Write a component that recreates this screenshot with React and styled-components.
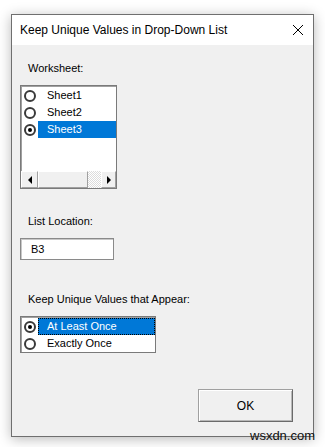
import React from 'react';
import styled, { createGlobalStyle } from 'styled-components';

const GlobalStyle = createGlobalStyle`
  body {
    margin: 0;
    background: #ffffff;
    font-family: "Liberation Sans", Arial, sans-serif;
  }
`;

const Page = styled.div`
  position: relative;
  width: 325px;
  height: 447px;
  padding: 14px 0 0 11px;
  box-sizing: border-box;
  overflow: hidden;
`;

const Window = styled.div`
  width: 303px;
  height: 423px;
  box-sizing: border-box;
  border: 1px solid #6f6f6f;
  background: #f0f0f0;
  box-shadow: 0 2px 12px rgba(0, 0, 0, 0.28);
  display: flex;
  flex-direction: column;
`;

const TitleBar = styled.div`
  height: 30px;
  background: #ffffff;
  display: flex;
  align-items: center;
  justify-content: space-between;
  padding: 0 9px 0 8px;
  font-size: 12px;
  color: #000;
`;

const CloseIcon = () => (
  <svg width="12" height="12" viewBox="0 0 12 12">
    <path d="M1 1 L11 11 M11 1 L1 11" stroke="#000" strokeWidth="1" />
  </svg>
);

const Body = styled.div`
  flex: 1;
  display: flex;
  flex-direction: column;
  padding: 0 0 0 8px;
  font-size: 11px;
  color: #000;
`;

const Label = styled.div`
  margin: ${p => p.top}px 0 0 8px;
  height: 13px;
  line-height: 13px;
`;

const ListBox = styled.div`
  margin-top: ${p => p.top}px;
  width: ${p => p.w}px;
  height: ${p => p.h}px;
  box-sizing: border-box;
  border: 1px solid #7a7a7a;
  box-shadow: inset 1px 1px 0 #a0a0a0;
  background: #fff;
  display: flex;
  flex-direction: column;
  padding-top: 1px;
`;

const Rows = styled.div`
  flex: 1;
`;

const Row = styled.div`
  height: 17px;
  display: flex;
  align-items: center;
`;

const Radio = styled.span`
  width: 12px;
  height: 12px;
  box-sizing: border-box;
  border: 2px solid #3a3a3a;
  border-radius: 50%;
  margin: 0 2px 0 3px;
  display: flex;
  align-items: center;
  justify-content: center;
  flex: none;

  &::after {
    content: '';
    width: 4px;
    height: 4px;
    border-radius: 50%;
    background: ${p => (p.checked ? '#000' : 'transparent')};
  }
`;

const ItemText = styled.span`
  flex: 1;
  height: 17px;
  line-height: 17px;
  padding-left: 9px;
  box-sizing: border-box;
  background: ${p => (p.selected ? '#0078d7' : 'transparent')};
  color: ${p => (p.selected ? '#fff' : '#000')};
  outline: ${p => (p.focused ? '1px dotted #000' : 'none')};
  outline-offset: -1px;
`;

const ScrollBar = styled.div`
  height: 17px;
  display: flex;
  background-image: repeating-conic-gradient(#ffffff 0 25%, #dcdcdc 0 50%);
  background-size: 2px 2px;
`;

const ScrollButton = styled.div`
  width: ${p => p.w}px;
  box-sizing: border-box;
  background: #f0f0f0;
  border-top: 1px solid #fff;
  border-left: 1px solid #fff;
  border-right: 1px solid #a0a0a0;
  border-bottom: 1px solid #a0a0a0;
  display: flex;
  align-items: center;
  justify-content: center;
  margin-left: ${p => (p.push ? 'auto' : '0')};
`;

const Arrow = styled.span`
  width: 0;
  height: 0;
  border-top: 4px solid transparent;
  border-bottom: 4px solid transparent;
  ${p => (p.dir === 'left' ? 'border-right: 4px solid #000;' : 'border-left: 4px solid #000;')}
`;

const TextBox = styled.div`
  margin-top: 10px;
  width: 94px;
  height: 22px;
  box-sizing: border-box;
  border: 1px solid #8a8a8a;
  box-shadow: inset 1px 1px 0 #c8c8c8;
  background: #fff;
  padding-left: 10px;
  line-height: 20px;
`;

const Footer = styled.div`
  margin-top: 36px;
  display: flex;
  justify-content: flex-end;
  padding-right: 20px;
`;

const Button = styled.button`
  width: 95px;
  height: 33px;
  box-sizing: border-box;
  background: #f0f0f0;
  border: 1px solid #a0a0a0;
  border-right-color: #6a6a6a;
  border-bottom-color: #6a6a6a;
  box-shadow: inset 1px 1px 0 #fff, inset -1px -1px 0 #b8b8b8;
  font-family: "Liberation Sans", Arial, sans-serif;
  font-size: 12px;
  color: #000;
  padding: 0;
`;

const Watermark = styled.div`
  position: absolute;
  left: 250px;
  top: 428px;
  font-size: 13px;
  color: #111;
  font-family: "Liberation Sans", Arial, sans-serif;
`;

const sheets = ['Sheet1', 'Sheet2', 'Sheet3'];
const modes = ['At Least Once', 'Exactly Once'];

export default function App() {
  return (
    <>
      <GlobalStyle />
      <Page>
        <Window>
          <TitleBar>
            <span>Keep Unique Values in Drop-Down List</span>
            <CloseIcon />
          </TitleBar>
          <Body>
            <Label top={17}>Worksheet:</Label>
            <ListBox top={10} w={97} h={104}>
              <Rows>
                {sheets.map((s, i) => (
                  <Row key={s}>
                    <Radio checked={i === 2} />
                    <ItemText selected={i === 2}>{s}</ItemText>
                  </Row>
                ))}
              </Rows>
              <ScrollBar>
                <ScrollButton w={17}><Arrow dir="left" /></ScrollButton>
                <ScrollButton w={50} />
                <ScrollButton w={15} push><Arrow dir="right" /></ScrollButton>
              </ScrollBar>
            </ListBox>
            <Label top={26}>List Location:</Label>
            <TextBox>B3</TextBox>
            <Label top={33}>Keep Unique Values that Appear:</Label>
            <ListBox top={10} w={136} h={37}>
              <Rows>
                {modes.map((m, i) => (
                  <Row key={m}>
                    <Radio checked={i === 0} />
                    <ItemText selected={i === 0} focused={i === 0}>{m}</ItemText>
                  </Row>
                ))}
              </Rows>
            </ListBox>
            <Footer>
              <Button>OK</Button>
            </Footer>
          </Body>
        </Window>
        <Watermark>wsxdn.com</Watermark>
      </Page>
    </>
  );
}
